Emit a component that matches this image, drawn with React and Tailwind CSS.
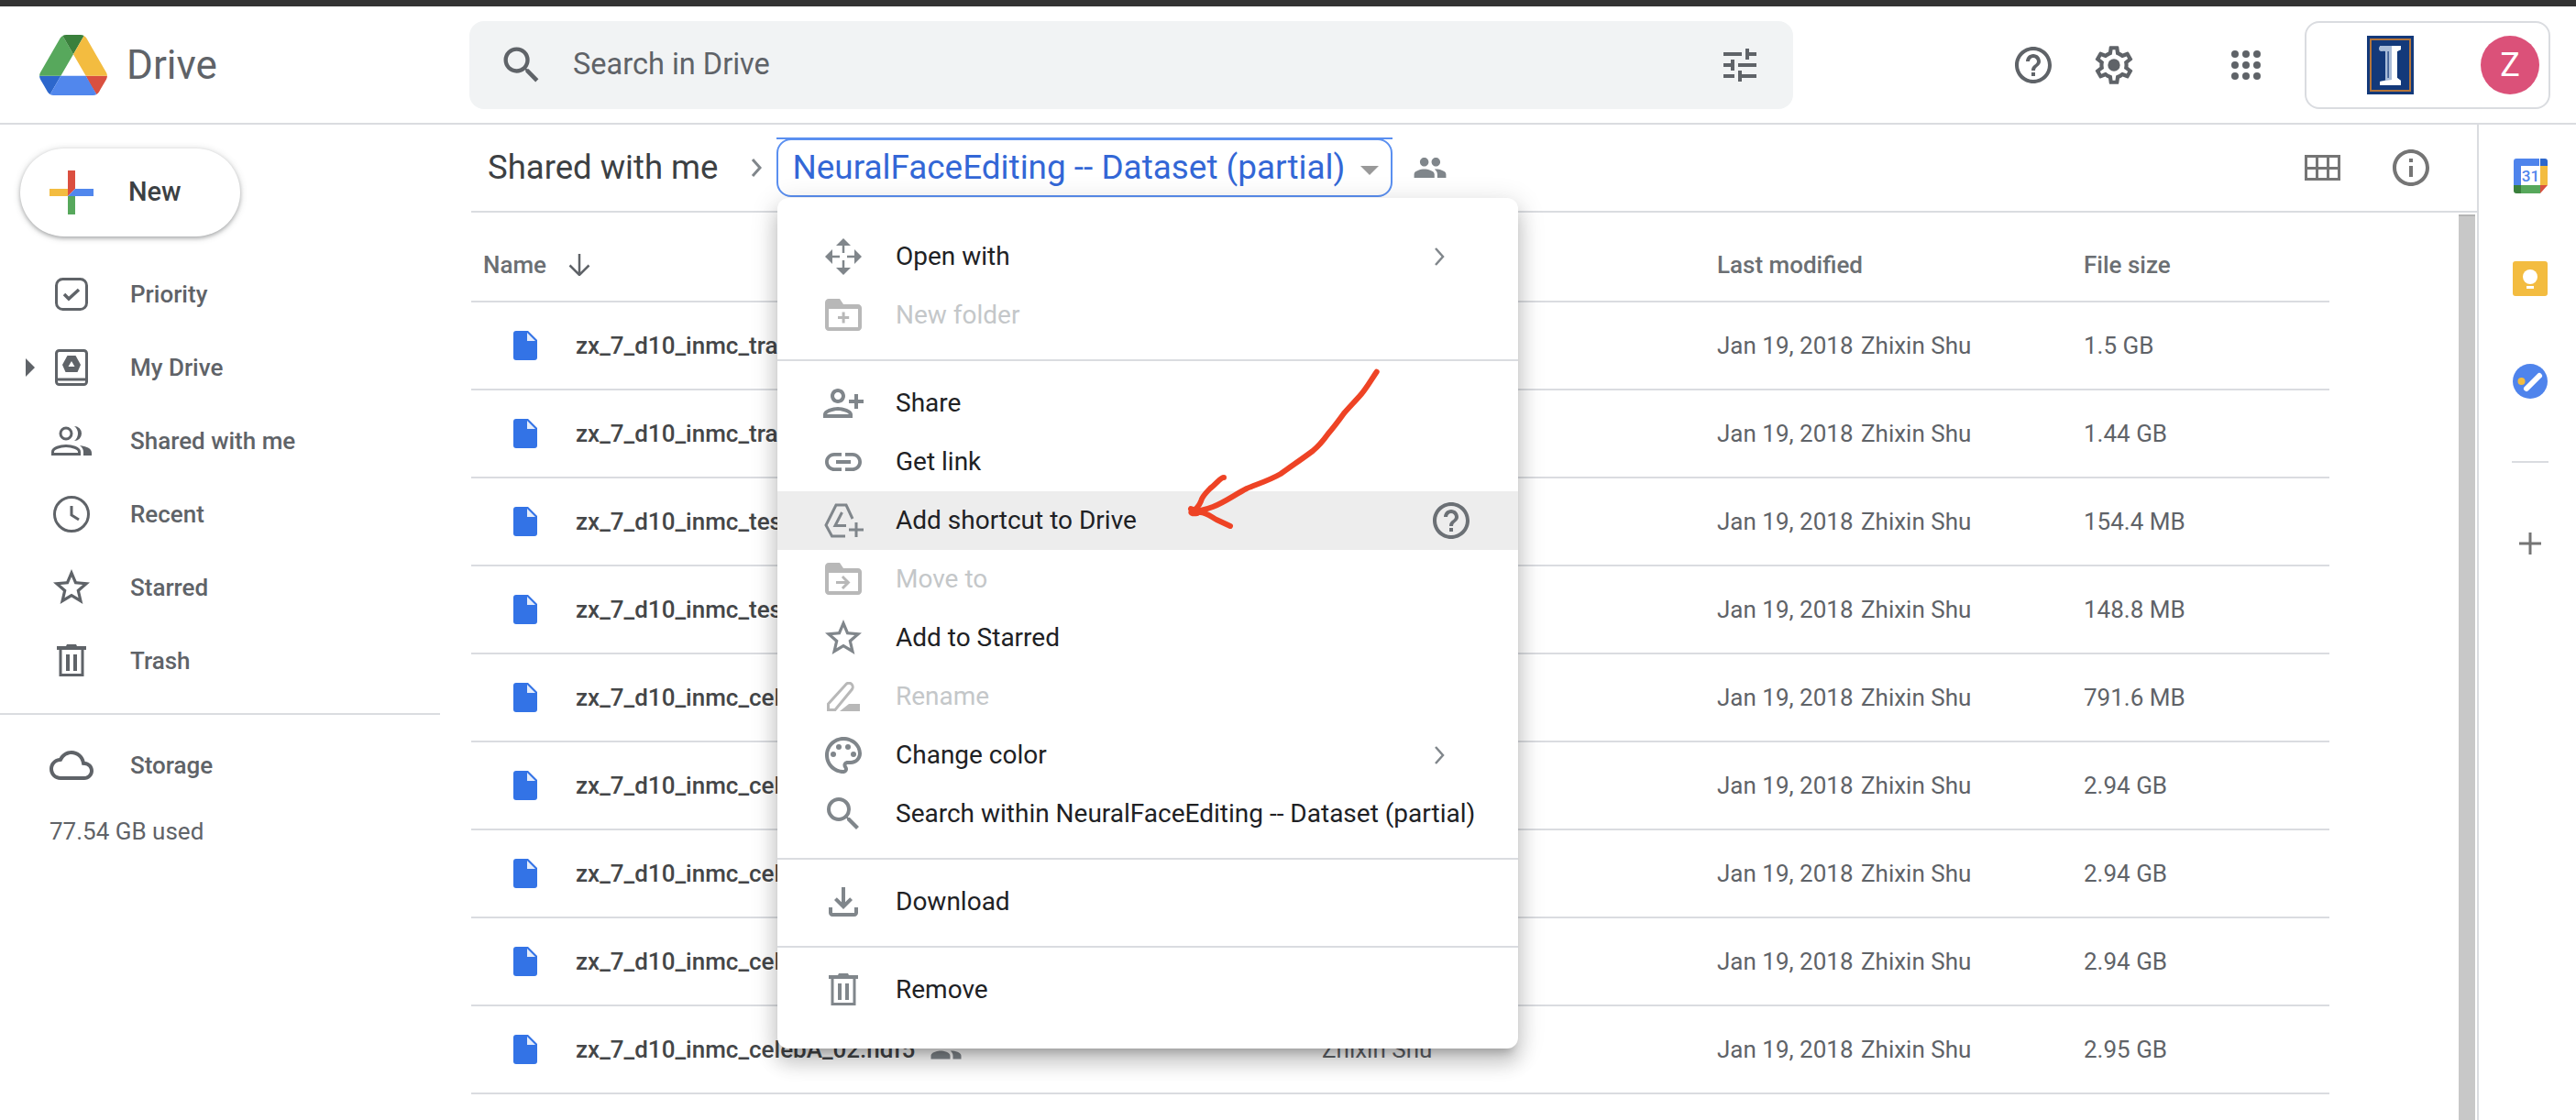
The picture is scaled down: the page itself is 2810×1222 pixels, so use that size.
import React from "react";

const G = "#5f6368";
const M = "#80868b";
const D = "#b8b8b8";

const P = {
  search: "M15.5 14h-.79l-.28-.27A6.471 6.471 0 0 0 16 9.5 6.5 6.5 0 1 0 9.5 16c1.61 0 3.09-.59 4.23-1.57l.27.28v.79l5 4.99L20.49 19l-4.99-5zm-6 0C7.01 14 5 11.99 5 9.5S7.01 5 9.5 5 14 7.01 14 9.5 11.99 14 9.5 14z",
  tune: "M3 17v2h6v-2H3zM3 5v2h10V5H3zm10 16v-2h8v-2h-8v-2h-2v6h2zM7 9v2H3v2h4v2h2V9H7zm14 4v-2H11v2h10zm-6-4h2V7h4V5h-4V3h-2v6z",
  help: "M11 18h2v-2h-2v2zm1-16C6.48 2 2 6.48 2 12s4.48 10 10 10 10-4.48 10-10S17.52 2 12 2zm0 18c-4.41 0-8-3.59-8-8s3.59-8 8-8 8 3.59 8 8-3.59 8-8 8zm0-14c-2.21 0-4 1.79-4 4h2c0-1.1.9-2 2-2s2 .9 2 2c0 2-3 1.75-3 5h2c0-2.25 3-2.5 3-5 0-2.21-1.79-4-4-4z",
  info: "M11 7h2v2h-2V7zm0 4h2v6h-2v-6zm1-9C6.48 2 2 6.48 2 12s4.48 10 10 10 10-4.48 10-10S17.52 2 12 2zm0 18c-4.41 0-8-3.59-8-8s3.59-8 8-8 8 3.59 8 8-3.59 8-8 8z",
  gear: "M19.43 12.98c.04-.32.07-.64.07-.98 0-.34-.03-.66-.07-.98l2.11-1.65c.19-.15.24-.42.12-.64l-2-3.46c-.09-.16-.26-.25-.44-.25-.06 0-.12.01-.17.03l-2.49 1c-.52-.4-1.08-.73-1.69-.98l-.38-2.65C14.46 2.18 14.25 2 14 2h-4c-.25 0-.46.18-.49.42l-.38 2.65c-.61.25-1.17.59-1.69.98l-2.49-1c-.06-.02-.12-.03-.18-.03-.17 0-.34.09-.43.25l-2 3.46c-.13.22-.07.49.12.64l2.11 1.65c-.04.32-.07.65-.07.98 0 .33.03.66.07.98l-2.11 1.65c-.19.15-.24.42-.12.64l2 3.46c.09.16.26.25.44.25.06 0 .12-.01.17-.03l2.49-1c.52.4 1.08.73 1.69.98l.38 2.65c.03.24.24.42.49.42h4c.25 0 .46-.18.49-.42l.38-2.65c.61-.25 1.17-.59 1.69-.98l2.49 1c.06.02.12.03.18.03.17 0 .34-.09.43-.25l2-3.46c.12-.22.07-.49-.12-.64l-2.11-1.65zm-1.98-1.71c.04.31.05.52.05.73 0 .21-.02.43-.05.73l-.14 1.13.89.7 1.08.84-.7 1.21-1.27-.51-1.04-.42-.9.68c-.43.32-.84.56-1.25.73l-1.06.43-.16 1.13-.2 1.35h-1.4l-.19-1.35-.16-1.13-1.06-.43c-.43-.18-.83-.41-1.23-.71l-.91-.7-1.06.43-1.27.51-.7-1.21 1.08-.84.89-.7-.14-1.13c-.03-.31-.05-.54-.05-.74s.02-.43.05-.73l.14-1.13-.89-.7-1.08-.84.7-1.21 1.27.51 1.04.42.9-.68c.43-.32.84-.56 1.25-.73l1.06-.43.16-1.13.2-1.35h1.39l.19 1.35.16 1.13 1.06.43c.43.18.83.41 1.23.71l.91.7 1.06-.43 1.27-.51.7 1.21-1.07.85-.89.7.14 1.13z",
  group: "M16 11c1.66 0 2.99-1.34 2.99-3S17.66 5 16 5c-1.66 0-3 1.34-3 3s1.34 3 3 3zm-8 0c1.66 0 2.99-1.34 2.99-3S9.66 5 8 5C6.34 5 5 6.34 5 8s1.34 3 3 3zm0 2c-2.33 0-7 1.17-7 3.5V19h14v-2.5c0-2.33-4.67-3.5-7-3.5zm8 0c-.29 0-.62.02-.97.05 1.16.84 1.97 1.97 1.97 3.45V19h6v-2.5c0-2.33-4.67-3.5-7-3.5z",
  star: "M22 9.24l-7.19-.62L12 2 9.19 8.63 2 9.24l5.46 4.73L5.82 21 12 17.27 18.18 21l-1.63-7.03L22 9.24zM12 15.4l-3.76 2.27 1-4.28-3.32-2.88 4.38-.38L12 6.1l1.71 4.04 4.38.38-3.32 2.88 1 4.28L12 15.4z",
  cloud: "M19.35 10.04C18.67 6.59 15.64 4 12 4 9.11 4 6.6 5.64 5.35 8.04 2.34 8.36 0 10.91 0 14c0 3.31 2.69 6 6 6h13c2.76 0 5-2.24 5-5 0-2.64-2.05-4.78-4.65-4.96zM19 18H6c-2.21 0-4-1.79-4-4 0-2.05 1.53-3.76 3.56-3.97l1.07-.11.5-.95C8.08 7.14 9.94 6 12 6c2.62 0 4.88 1.86 5.39 4.43l.3 1.5 1.53.11c1.56.1 2.78 1.41 2.78 2.96 0 1.65-1.35 3-3 3z",
  folder: "M4 3h6l2 3h8c1.1 0 2 .9 2 2v10.500c0 1.100-.9 2-2 2H4c-1.100 0-2-.9-2-2V5c0-1.100.9-2 2-2zm0 5.500v10h16v-10z",
  plusInFolder: "M11.3 10.200h1.500v2.300h2.300v1.500h-2.300v2.300h-1.500V14H9v-1.500h2.300z",
  arrowInFolder: "M12 10l-1.06 1.06L12.88 13H8v1.5h4.88l-1.94 1.94L12 17.5l3.75-3.75z",
  person: "M15 12c2.21 0 4-1.79 4-4s-1.79-4-4-4-4 1.79-4 4 1.79 4 4 4zm0-6c1.1 0 2 .9 2 2s-.9 2-2 2-2-.9-2-2 .9-2 2-2zm0 8c-2.67 0-8 1.34-8 4v2h16v-2c0-2.66-5.33-4-8-4zm-6 4c.22-.72 3.31-2 6-2 2.7 0 5.8 1.29 6 2H9zm-3-3v-3h3v-2H6V7H4v3H1v2h3v3h2z",
  link: "M3.9 12c0-1.71 1.39-3.1 3.1-3.1h4V7H7c-2.76 0-5 2.24-5 5s2.24 5 5 5h4v-1.9H7c-1.71 0-3.1-1.39-3.1-3.1zM8 13h8v-2H8v2zm9-6h-4v1.9h4c1.71 0 3.1 1.39 3.1 3.1s-1.39 3.1-3.1 3.1h-4V17h4c2.76 0 5-2.24 5-5s-2.24-5-5-5z",
  palette: "M12 22C6.49 22 2 17.51 2 12S6.49 2 12 2s10 4.04 10 9c0 3.31-2.69 6-6 6h-1.77c-.28 0-.5.22-.5.5 0 .12.05.23.13.33.41.47.64 1.06.64 1.67 0 1.38-1.12 2.5-2.5 2.5zm0-18c-4.41 0-8 3.59-8 8s3.59 8 8 8c.28 0 .5-.22.5-.5 0-.16-.08-.28-.14-.35-.41-.46-.63-1.05-.63-1.65 0-1.38 1.12-2.5 2.5-2.5H16c2.21 0 4-1.79 4-4 0-3.86-3.59-7-8-7z",
  download: "M18 15v3H6v-3H4v3c0 1.1.9 2 2 2h12c1.1 0 2-.9 2-2v-3h-2zm-1-4l-1.41-1.41L13 12.17V4h-2v8.17L8.41 9.59 7 11l5 5 5-5z",
};

function Ic({ d, c = G, s = 48, children }) {
  return (
    <svg width={s} height={s} viewBox="0 0 24 24" fill={c} className="shrink-0">
      {d && <path d={d} fillRule="evenodd" />}
      {children}
    </svg>
  );
}

function DriveLogo() {
  return (
    <svg width="74" height="66" viewBox="0 0 87.3 78" className="shrink-0">
      <path d="m6.6 66.85 3.85 6.65c.8 1.4 1.95 2.5 3.3 3.3l13.75-23.8h-27.5c0 1.55.4 3.1 1.2 4.5z" fill="#2d67cc" />
      <path d="m43.65 25-13.75-23.8c-1.35.8-2.5 1.9-3.3 3.3l-25.4 44a9.06 9.06 0 0 0 -1.2 4.5h27.5z" fill="#57a85c" />
      <path d="m73.55 76.8c1.35-.8 2.5-1.9 3.3-3.3l1.6-2.75 7.65-13.25c.8-1.4 1.2-2.95 1.2-4.5h-27.502l5.852 11.5z" fill="#d95040" />
      <path d="m43.65 25 13.75-23.8c-1.35-.8-2.9-1.2-4.5-1.2h-18.5c-1.6 0-3.15.45-4.5 1.2z" fill="#3a803c" />
      <path d="m59.8 53h-32.3l-13.75 23.8c1.35.8 2.9 1.2 4.5 1.2h50.8c1.6 0 3.15-.45 4.5-1.2z" fill="#5187ed" />
      <path d="m73.4 26.5-12.7-22c-.8-1.4-1.95-2.5-3.3-3.3l-13.75 23.8 16.15 28h27.45c0-1.55-.4-3.1-1.2-4.5z" fill="#f3bc40" />
    </svg>
  );
}

function Illinois() {
  return (
    <svg width="51" height="64" viewBox="0 0 51 64" className="shrink-0">
      <rect width="51" height="64" fill="#13397a" />
      <rect x="4" y="4" width="43" height="56" fill="none" stroke="#b5753a" strokeWidth="2" />
      <path d="M14 11h23v4l-4 2v29l4 3v5H14v-4l6-1.500V17l-6-1z" fill="#a9bcd8" />
      <path d="M27 11h10v4l-4 2v29l4 3v5H14v-4l13-2z" fill="#fff" />
      <circle cx="16" cy="14" r="3" fill="#a9bcd8" />
      <path d="M22.500 17h1.200v29h-1.200z" fill="#13397a" />
    </svg>
  );
}

function Calendar() {
  return (
    <svg width="37" height="38" viewBox="0 0 37 38" className="shrink-0">
      <path d="M3 0h29l5 5v23l-9 10H3a3 3 0 0 1-3-3V3a3 3 0 0 1 3-3z" fill="#fff" />
      <path d="M0 3a3 3 0 0 1 3-3h25v8H8v21H0z" fill="#4f84ec" />
      <path d="M29 0h5a3 3 0 0 1 3 3v5h-8z" fill="#2d67cc" />
      <rect x="29" y="8" width="8" height="21" fill="#f3bc40" />
      <rect x="8" y="29" width="21" height="9" fill="#57a85c" />
      <path d="M0 29h8v9H3a3 3 0 0 1-3-3z" fill="#3a803c" />
      <path d="M29 29h8l-8 9z" fill="#d95040" />
      <text x="18.5" y="25" textAnchor="middle" fontFamily="Roboto, sans-serif" fontWeight="500" fontSize="17" fill="#4f84ec">31</text>
    </svg>
  );
}

function Keep() {
  return (
    <svg width="38" height="38" viewBox="0 0 38 38" className="shrink-0">
      <rect width="38" height="38" rx="3" fill="#f3bc40" />
      <circle cx="19" cy="17" r="8" fill="#fff" />
      <rect x="16" y="20" width="6" height="4" fill="#fff" />
      <rect x="15" y="27" width="8" height="3" fill="#fff" />
    </svg>
  );
}

function Tasks() {
  return (
    <svg width="38" height="38" viewBox="0 0 38 38" className="shrink-0">
      <circle cx="19" cy="19" r="19" fill="#4f84ec" />
      <circle cx="9.5" cy="19" r="4" fill="#f3bc40" />
      <path d="M15 27L29 13" stroke="#fff" strokeWidth="6" strokeLinecap="round" />
    </svg>
  );
}

function Priority() {
  return (
    <svg width="36" height="36" viewBox="0 0 36 36" fill="none" stroke={G} className="shrink-0">
      <rect x="1.5" y="1.5" width="33" height="33" rx="7" strokeWidth="3" />
      <path d="M10 18l5 5 11-10" strokeWidth="3.5" />
    </svg>
  );
}

function MyDrive() {
  return (
    <svg width="36" height="40" viewBox="0 0 36 40" className="shrink-0">
      <rect x="1.5" y="1.5" width="33" height="37" rx="3" fill="none" stroke={G} strokeWidth="3" />
      <rect x="2" y="31.5" width="32" height="3" fill={G} />
      <path d="M13.5 7h9l5.5 10-3.5 8h-13L8 17z" fill={G} />
      <path d="M18 13l3.5 6h-7z" fill="#fff" />
    </svg>
  );
}

function SharedPeople() {
  return (
    <svg width="44" height="32" viewBox="0 0 44 32" className="shrink-0">
      <circle cx="16" cy="8" r="6" fill="none" stroke={G} strokeWidth="3" />
      <path d="M1.5 30.5v-2.5c0-4 8-6.5 14.500-6.500s14.500 2.500 14.500 6.500v2.500z" fill="none" stroke={G} strokeWidth="3" />
      <path d="M25 0a8 8 0 0 1 0 16a10 10 0 0 0 0-16z" fill={G} />
      <path d="M31 21c7 1 13 3 13 8v3h-9v-4c0-3-1.500-5-4-7z" fill={G} />
    </svg>
  );
}

function Recent() {
  return (
    <svg width="40" height="40" viewBox="0 0 40 40" fill="none" stroke={G} strokeWidth="3" className="shrink-0">
      <circle cx="20" cy="20" r="18.5" />
      <path d="M20 11v10l8 5" />
    </svg>
  );
}

function Trash({ c = G, w = 32, h = 36 }) {
  return (
    <svg width={w} height={h} viewBox="0 0 32 36" className="shrink-0">
      <path d="M0 2h10l1-2h10l1 2h10v4H0z" fill={c} />
      <path d="M4 6v27.500h24V6" fill="none" stroke={c} strokeWidth="3" />
      <rect x="10" y="11" width="4" height="18" fill={c} />
      <rect x="18" y="11" width="4" height="18" fill={c} />
    </svg>
  );
}

function OpenWith() {
  return (
    <svg width="40" height="40" viewBox="0 0 40 40" fill={M} className="shrink-0">
      <path d="M20 0l8 8H12zM20 40l-8-8h16zM0 20l8-8v16zM40 20l-8 8V12z" />
      <path d="M20 8v8M20 24v8M8 20h8M24 20h8" stroke={M} strokeWidth="2.5" fill="none" />
    </svg>
  );
}

function Shortcut() {
  return (
    <svg width="43" height="38" viewBox="0 0 43 38" fill="none" stroke={M} strokeWidth="3" className="shrink-0">
      <path d="M31 17L24 2H13L2 24l6.500 12H23" />
      <path d="M19.500 10L12 24.500h12" />
      <path d="M35 21v16M27 29h16" />
    </svg>
  );
}

function Pencil() {
  return (
    <svg width="36" height="32" viewBox="0 0 36 32" className="shrink-0">
      <path d="M1.500 30.500V24L21 2.500c2-2 4.500-1.500 6 0s1.500 4 .5 5.500L9 30.500z" fill="none" stroke={D} strokeWidth="3" />
      <path d="M24 24h12v8H14z" fill={D} />
    </svg>
  );
}

function Chevron({ c = M, w = 14, h = 22, sw = 2.5 }) {
  return (
    <svg width={w} height={h} viewBox="0 0 14 22" fill="none" stroke={c} strokeWidth={sw} className="shrink-0">
      <path d="M3 2l8 9-8 9" />
    </svg>
  );
}

function FileIcon() {
  return (
    <svg width="26" height="32" viewBox="0 0 26 32" className="shrink-0">
      <path d="M3 0h13l10 10v19a3 3 0 0 1-3 3H3a3 3 0 0 1-3-3V3a3 3 0 0 1 3-3z" fill="#3373e6" />
      <path d="M15 2l9 9h-9z" fill="#e4ecfb" />
    </svg>
  );
}

function Arrow() {
  return (
    <svg viewBox="1290 400 220 180" fill="none" stroke="#ee4325" strokeWidth="6" strokeLinecap="round" strokeLinejoin="round" className="absolute left-[1290px] top-[400px] w-[220px] h-[180px]">
      <path d="M1501.700 405.700C1496 414 1491 423 1485 430C1479 437 1472 444 1466 451C1461 458 1455 466 1449 473C1444 480 1438 487 1432 492C1420 501 1408 509 1397 517C1385 524 1372 528 1360 533C1348 539 1336 548 1323 553C1315 556 1308 558 1300 558" />
      <path d="M1335 521C1331 521 1328 527 1320 533C1315 538 1311 542 1310 547C1308 552 1304 556 1300 558C1298 559 1300 561 1306 560" />
      <path d="M1299 555L1309 559C1315 559 1320 563 1327 567L1342 574" />
    </svg>
  );
}

const nav = [
  ["Priority", <Priority />],
  ["My Drive", <MyDrive />, true],
  ["Shared with me", <SharedPeople />],
  ["Recent", <Recent />],
  ["Starred", <Ic d={P.star} />],
  ["Trash", <Trash />],
];

const rows = [
  ["zx_7_d10_inmc_train_02.hdf5", "1.5 GB"],
  ["zx_7_d10_inmc_train_01.hdf5", "1.44 GB"],
  ["zx_7_d10_inmc_test_02.hdf5", "154.4 MB"],
  ["zx_7_d10_inmc_test_01.hdf5", "148.8 MB"],
  ["zx_7_d10_inmc_celebA_20.hdf5", "791.6 MB"],
  ["zx_7_d10_inmc_celebA_05.hdf5", "2.94 GB"],
  ["zx_7_d10_inmc_celebA_04.hdf5", "2.94 GB"],
  ["zx_7_d10_inmc_celebA_03.hdf5", "2.94 GB"],
  ["zx_7_d10_inmc_celebA_02.hdf5", "2.95 GB"],
];

function MenuRow({ icon, label, disabled, highlight, right }) {
  return (
    <div className={`h-[64px] flex items-center ${highlight ? "bg-[#ededed]" : ""}`}>
      <div className="w-[129px] flex pl-[48px] shrink-0">
        <div className="w-[48px] h-[48px] flex items-center justify-center shrink-0">{icon}</div>
      </div>
      <span className={`text-[28px] ${disabled ? "text-[#c4c7c9]" : "text-[#202124]"}`}>{label}</span>
      {right}
    </div>
  );
}

const chevRight = (
  <div className="ml-auto mr-[79px]">
    <Chevron />
  </div>
);

export default function App() {
  return (
    <div className="relative h-screen w-full overflow-hidden bg-white font-[Roboto,sans-serif] flex flex-col">
      <div className="h-[7px] bg-[#333333] shrink-0" />

      <header className="h-[129px] shrink-0 border-b-2 border-[#dadce0] flex items-center">
        <div className="w-[512px] shrink-0 flex items-center pl-[43px]">
          <DriveLogo />
          <span className="ml-[21px] text-[44px] leading-none text-[#5f6368]">Drive</span>
        </div>
        <div className="w-[1444px] h-[96px] rounded-2xl bg-[#f1f3f4] flex items-center pl-[31px] pr-[34px] shrink-0">
          <Ic d={P.search} s={52} />
          <span className="ml-[30px] text-[32.5px] text-[#5f6368]">Search in Drive</span>
          <div className="ml-auto">
            <Ic d={P.tune} />
          </div>
        </div>
        <div className="ml-[238px]"><Ic d={P.help} /></div>
        <div className="ml-[39px]">
          <Ic s={50}>
            <path d={P.gear} />
            <circle cx="12" cy="12" r="3.2" />
          </Ic>
        </div>
        <div className="ml-[103px]">
          <svg width="32" height="32" viewBox="0 0 32 32" fill={G} className="shrink-0">
            {[4, 16, 28].map((y) => [4, 16, 28].map((x) => <circle key={`${x}-${y}`} cx={x} cy={y} r="4" />))}
          </svg>
        </div>
        <div className="ml-[48px] w-[268px] h-[96px] border-2 border-[#dadce0] rounded-2xl flex items-center pl-[66px] shrink-0">
          <Illinois />
          <div className="ml-[73px] w-[64px] h-[64px] rounded-full bg-[#db5179] flex items-center justify-center text-white text-[36px]">Z</div>
        </div>
      </header>

      <div className="flex-1 flex min-h-0">
        <aside className="w-[514px] shrink-0">
          <div className="ml-[22px] mt-[26px] w-[240px] h-[96px] rounded-full bg-white flex items-center pl-[32px] shadow-[0_2px_4px_rgba(60,64,67,0.35),0_1px_8px_rgba(60,64,67,0.2)]">
            <svg width="48" height="48" viewBox="0 0 48 48" className="shrink-0">
              <rect x="20" y="0" width="8" height="20" fill="#db4f40" />
              <rect x="0" y="20" width="20" height="8" fill="#f3bc40" />
              <rect x="28" y="20" width="20" height="8" fill="#5187ed" />
              <rect x="20" y="28" width="8" height="20" fill="#57a85c" />
              <path d="M20 20h8l-8 8z" fill="#db4f40" />
              <path d="M28 20v8h-8z" fill="#5187ed" />
            </svg>
            <span className="ml-[38px] text-[29px] font-medium text-[#3c4043]">New</span>
          </div>
          <nav className="mt-[23px]">
            {nav.map(([label, icon, caret]) => (
              <div key={label} className="relative h-[80px] flex items-center pl-[54px]">
                {caret && (
                  <span className="absolute left-[28px] top-[30px] w-0 h-0 border-y-[10px] border-y-transparent border-l-[10px] border-l-[#5f6368]" />
                )}
                <div className="w-[48px] h-[48px] flex items-center justify-center shrink-0">{icon}</div>
                <span className="ml-[40px] text-[26px] font-medium text-[#5f6368]">{label}</span>
              </div>
            ))}
          </nav>
          <div className="mt-[17px] w-[480px] h-[2px] bg-[#dadce0]" />
          <div className="mt-[15px] h-[80px] flex items-center pl-[54px]">
            <Ic d={P.cloud} />
            <span className="ml-[40px] text-[26px] font-medium text-[#5f6368]">Storage</span>
          </div>
          <div className="mt-[17px] pl-[54px] text-[26px] leading-[30px] text-[#5f6368]">77.54 GB used</div>
        </aside>

        <main className="flex-1 min-w-0 flex flex-col">
          <div className="h-[96px] shrink-0 border-b-2 border-[#dadce0] flex items-center pl-[18px] pr-[48px]">
            <span className="text-[36.5px] text-[#3c4043]">Shared with me</span>
            <div className="ml-[35px] mr-[15px]">
              <Chevron c="#80868b" w={14} h={24} sw={3} />
            </div>
            <div className="relative w-[672px] h-[64px] border-2 border-[#5a8ff0] rounded-2xl flex items-center pl-[15px] shrink-0">
              <span className="absolute -top-[3px] -left-[2px] -right-[2px] h-[2px] bg-[#5a8ff0]" />
              <span className="text-[36.9px] text-[#3367d6] whitespace-nowrap">NeuralFaceEditing -- Dataset (partial)</span>
              <span className="absolute left-[635px] top-[28px] w-0 h-0 border-x-[10px] border-x-transparent border-t-[10px] border-t-[#999999]" />
            </div>
            <div className="ml-[22px]"><Ic d={P.group} c="#80868b" s={38} /></div>
            <div className="ml-auto grid grid-cols-3 gap-[3px] w-[39px] h-[28px] bg-[#757575] p-[3px] shrink-0">
              {[0, 1, 2, 3, 4, 5].map((i) => <span key={i} className="bg-white" />)}
            </div>
            <div className="ml-[53px]"><Ic d={P.info} c="#757575" /></div>
          </div>

          <div className="flex-1 min-h-0 flex">
            <div className="w-[2027px] shrink-0">
              <div className="h-[98px] pt-[18px] border-b-2 border-[#dadce0] grid grid-cols-[928px_431px_400px_1fr] items-center text-[26px] font-medium text-[#6b6f73]">
                <div className="pl-[13px] flex items-center">
                  <span>Name</span>
                  <svg width="24" height="24" viewBox="0 0 24 24" fill="none" stroke={G} strokeWidth="2.5" className="ml-[24px] shrink-0">
                    <path d="M12 0v23M1.500 12.500L12 23l10.500-10.500" />
                  </svg>
                </div>
                <div>Owner</div>
                <div>Last modified</div>
                <div>File size</div>
              </div>
              {rows.map(([name, size]) => (
                <div key={name} className="h-[96px] border-b-2 border-[#dadce0] grid grid-cols-[928px_431px_400px_1fr] items-center text-[26px] text-[#5f6368]">
                  <div className="pl-[46px] flex items-center">
                    <FileIcon />
                    <span className="ml-[42px] font-medium text-[#444648] whitespace-nowrap">{name}</span>
                    <div className="ml-[16px]"><Ic d={P.group} c="#80868b" s={36} /></div>
                  </div>
                  <div>Zhixin Shu</div>
                  <div className="flex items-center">
                    <span className="w-[157px] shrink-0">Jan 19, 2018</span>
                    <span>Zhixin Shu</span>
                  </div>
                  <div>{size}</div>
                </div>
              ))}
            </div>
            <div className="ml-auto mr-[2px] mt-[2px] w-[18px] bg-[#c8c8c8] border-t-2 border-[#b4b4b4] shrink-0" />
          </div>
        </main>

        <aside className="w-[108px] shrink-0 border-l-2 border-[#dadce0] flex flex-col items-center pl-[6px] pt-[37px]">
          <Calendar />
          <div className="mt-[74px]"><Keep /></div>
          <div className="mt-[74px]"><Tasks /></div>
          <div className="mt-[68px] w-[40px] h-[2px] bg-[#dadce0]" />
          <svg width="24" height="24" viewBox="0 0 24 24" fill="#757575" className="mt-[76px] shrink-0">
            <path d="M10.500 0h3v10.500H24v3H13.500V24h-3V13.500H0v-3h10.500z" />
          </svg>
        </aside>
      </div>

      <div className="absolute left-[848px] top-[216px] w-[808px] h-[928px] bg-white rounded-xl py-4 shadow-[0_16px_20px_2px_rgba(0,0,0,0.14),0_6px_28px_4px_rgba(0,0,0,0.12),0_10px_10px_-6px_rgba(0,0,0,0.2)]">
        <div className="pt-4 pb-4">
          <MenuRow icon={<OpenWith />} label="Open with" right={chevRight} />
          <MenuRow icon={<Ic c={D}><path d={P.folder} fillRule="evenodd" /><path d={P.plusInFolder} /></Ic>} label="New folder" disabled />
        </div>
        <div className="border-t-2 border-[#dadce0] pt-[14px] pb-4">
          <MenuRow icon={<Ic c={M}><g transform="matrix(-1 0 0 1 24 0)"><path d={P.person} /></g></Ic>} label="Share" />
          <MenuRow icon={<Ic d={P.link} c={M} />} label="Get link" />
          <MenuRow
            icon={<Shortcut />}
            label="Add shortcut to Drive"
            highlight
            right={<div className="ml-auto mr-[49px]"><Ic d={P.help} c="#6b7075" /></div>}
          />
          <MenuRow icon={<Ic c={D}><path d={P.folder} fillRule="evenodd" /><path d={P.arrowInFolder} /></Ic>} label="Move to" disabled />
          <MenuRow icon={<Ic d={P.star} c={M} />} label="Add to Starred" />
          <MenuRow icon={<Pencil />} label="Rename" disabled />
          <MenuRow
            icon={<Ic c={M}><path d={P.palette} /><circle cx="6.500" cy="11.500" r="1.500" /><circle cx="9.500" cy="7.500" r="1.500" /><circle cx="14.500" cy="7.500" r="1.500" /><circle cx="17.500" cy="11.500" r="1.500" /></Ic>}
            label="Change color"
            right={chevRight}
          />
          <MenuRow icon={<Ic d={P.search} c={M} />} label="Search within NeuralFaceEditing -- Dataset (partial)" />
        </div>
        <div className="border-t-2 border-[#dadce0] pt-[14px] pb-4">
          <MenuRow icon={<Ic d={P.download} c={M} />} label="Download" />
        </div>
        <div className="border-t-2 border-[#dadce0] pt-[14px] pb-4">
          <MenuRow icon={<Trash c={M} />} label="Remove" />
        </div>
      </div>

      <Arrow />
    </div>
  );
}
